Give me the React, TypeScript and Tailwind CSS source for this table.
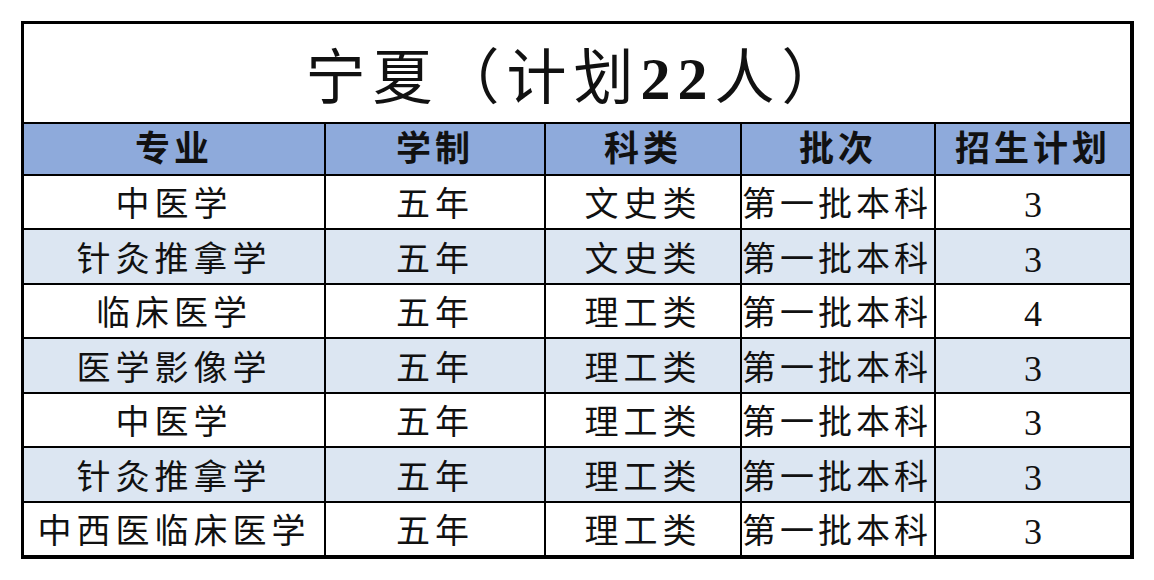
const rows = [
  { major: "中医学", years: "五年", kind: "文史类", batch: "第一批本科", plan: "3" },
  { major: "针灸推拿学", years: "五年", kind: "文史类", batch: "第一批本科", plan: "3" },
  { major: "临床医学", years: "五年", kind: "理工类", batch: "第一批本科", plan: "4" },
  { major: "医学影像学", years: "五年", kind: "理工类", batch: "第一批本科", plan: "3" },
  { major: "中医学", years: "五年", kind: "理工类", batch: "第一批本科", plan: "3" },
  { major: "针灸推拿学", years: "五年", kind: "理工类", batch: "第一批本科", plan: "3" },
  { major: "中西医临床医学", years: "五年", kind: "理工类", batch: "第一批本科", plan: "3" },
];

const headers = ["专业", "学制", "科类", "批次", "招生计划"];

const font = "font-['Liberation_Serif','Noto_Sans_CJK_SC',serif]";

export default function App() {
  return (
    <div className={`h-[580px] w-[1154px] bg-white pl-[21px] pt-[21px] text-[#111] ${font}`}>
      <div className="w-[1113px] border-b-[4px] border-l-[3px] border-r-[4px] border-t-[3px] border-black">
        <div className="grid grid-cols-[300px_218px_194px_192px_1fr] grid-rows-[98px_50px_52px_53px_52px_53px_52px_53px_52px] gap-[2px] bg-black">
          <div className="col-span-5 flex items-center justify-center bg-white pt-3 text-[60px] leading-none tracking-[7px]">
            宁夏（计划<span className="font-bold">22</span>人）
          </div>

          {headers.map((h) => (
            <div
              key={h}
              className="flex items-center justify-center whitespace-nowrap bg-[#8eaadb] text-[35px] font-bold leading-none tracking-[4px]"
            >
              {h}
            </div>
          ))}

          {rows.map((r, i) => {
            const bg = i % 2 === 1 ? "bg-[#dce6f2]" : "bg-white";
            return [
              <div key={`a${i}`} className={`${bg} flex items-center justify-center whitespace-nowrap pt-1.5 text-[34px] leading-none tracking-[5px]`}>
                {r.major}
              </div>,
              <div key={`b${i}`} className={`${bg} flex items-center justify-center whitespace-nowrap pt-1.5 text-[34px] leading-none tracking-[5px]`}>
                {r.years}
              </div>,
              <div key={`c${i}`} className={`${bg} flex items-center justify-center whitespace-nowrap pt-1.5 text-[34px] leading-none tracking-[5px]`}>
                {r.kind}
              </div>,
              <div key={`d${i}`} className={`${bg} flex items-center justify-start whitespace-nowrap pt-1.5 text-[34px] leading-none tracking-[4px]`}>
                {r.batch}
              </div>,
              <div key={`e${i}`} className={`${bg} flex items-center justify-center pt-1.5 text-[36px] leading-none`}>
                {r.plan}
              </div>,
            ];
          })}
        </div>
      </div>
    </div>
  );
}
